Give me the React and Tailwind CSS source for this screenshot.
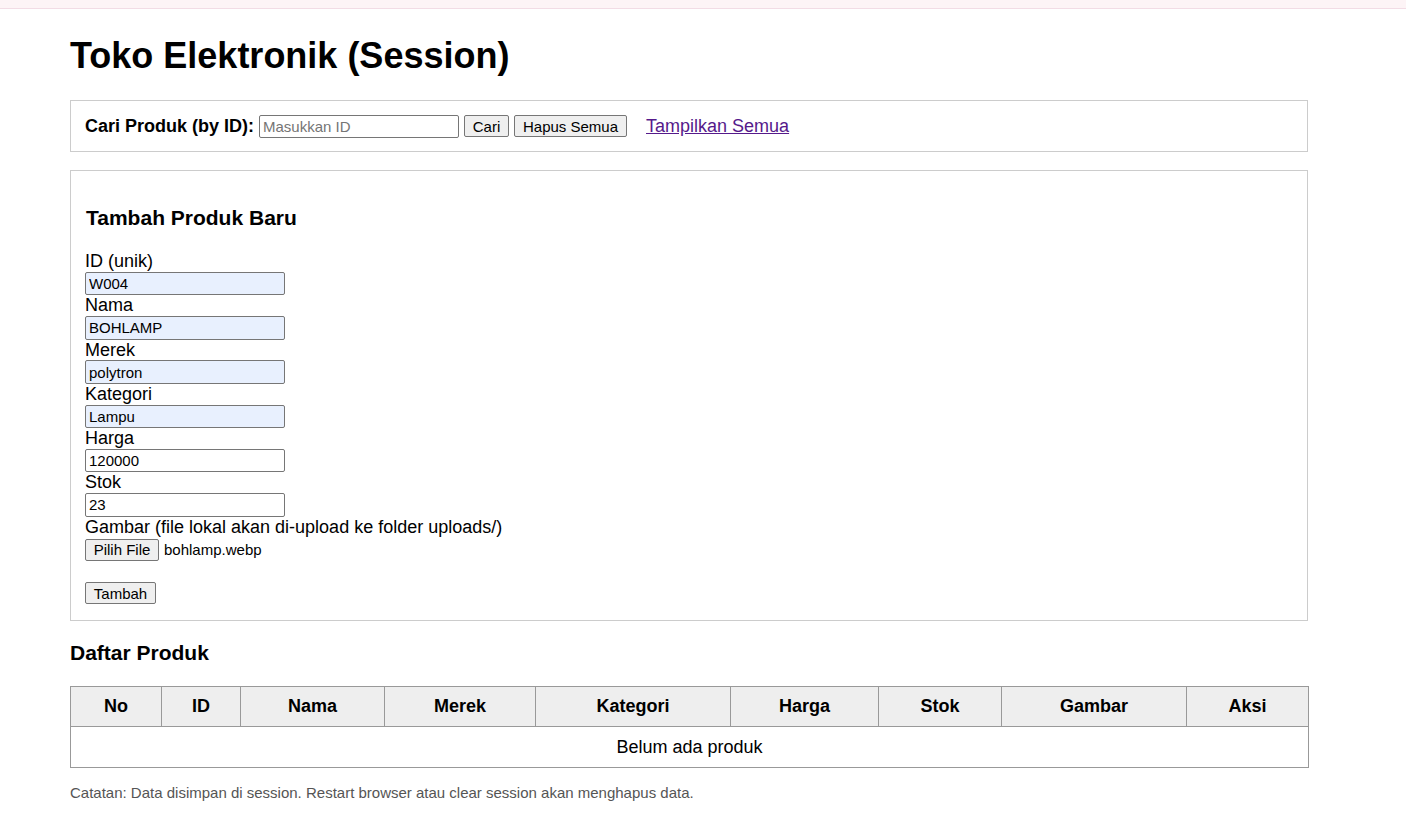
import React from 'react';

const fields = [
  { label: 'ID (unik)', value: 'W004', filled: true },
  { label: 'Nama', value: 'BOHLAMP', filled: true },
  { label: 'Merek', value: 'polytron', filled: true },
  { label: 'Kategori', value: 'Lampu', filled: true },
  { label: 'Harga', value: '120000', filled: false },
  { label: 'Stok', value: '23', filled: false },
];

const columns = [
  { name: 'No', w: 'w-[91px]' },
  { name: 'ID', w: 'w-[79px]' },
  { name: 'Nama', w: 'w-[144px]' },
  { name: 'Merek', w: 'w-[151px]' },
  { name: 'Kategori', w: 'w-[195px]' },
  { name: 'Harga', w: 'w-[148px]' },
  { name: 'Stok', w: 'w-[123px]' },
  { name: 'Gambar', w: 'w-[185px]' },
  { name: 'Aksi', w: 'w-[122px]' },
];

const btn = 'h-[22px] px-[7px] text-[15px] leading-none bg-[#efefef] border border-[#767676] rounded-[2px] text-black';

export default function App() {
  return (
    <div className="min-h-screen bg-white text-black text-[18px] leading-[1.15] font-['Liberation_Sans',Arial,sans-serif]">
      {/* thin strip at the very top */}
      <div className="h-[9px] bg-[#fdf4f6] border-b border-[#f2dce5]" />

      <div className="ml-[70px] w-[1238px] pt-[26px]">
        <h1 className="text-[36px] font-bold leading-[41px] mb-[24px]">Toko Elektronik (Session)</h1>

        {/* Search bar */}
        <div className="h-[52px] border border-[#cccccc] px-[14px] flex items-center">
          <span className="font-bold">Cari Produk (by ID):</span>
          <input
            type="text"
            placeholder="Masukkan ID"
            className="ml-[5px] w-[200px] h-[23px] px-[3px] text-[15px] border border-[#767676] rounded-[2px] placeholder:text-[#757575] outline-none"
          />
          <button className={`${btn} ml-[5px] w-[45px]`}>Cari</button>
          <button className={`${btn} ml-[5px] w-[113px]`}>Hapus Semua</button>
          <a href="#" className="ml-[19px] text-[#551a8b] underline">Tampilkan Semua</a>
        </div>

        {/* Add product form */}
        <div className="mt-[18px] border border-[#cccccc] px-[14px] pt-[35px] pb-[16px]">
          <h3 className="text-[21px] font-bold leading-[24px] mb-[21px] pl-[1px]">Tambah Produk Baru</h3>
          {fields.map(f => (
            <div key={f.label}>
              <label className="block leading-[20.7px]">{f.label}</label>
              <input
                type="text"
                defaultValue={f.value}
                className={`block w-[200px] h-[23.6px] px-[3px] text-[15px] border border-[#767676] rounded-[2px] outline-none ${f.filled ? 'bg-[#e8f0fe]' : 'bg-white'}`}
              />
            </div>
          ))}
          <label className="block leading-[20.7px]">Gambar (file lokal akan di-upload ke folder uploads/)</label>
          <div className="flex items-center mt-[1px] h-[23px]">
            <button className={`${btn} w-[74px]`}>Pilih File</button>
            <span className="ml-[5px] text-[15px]">bohlamp.webp</span>
          </div>
          <button className={`${btn} block mt-[21px] w-[71px]`}>Tambah</button>
        </div>

        <h3 className="text-[21px] font-bold leading-[24px] mt-[20px] mb-[21px]">Daftar Produk</h3>

        <table className="w-full table-fixed border-collapse border border-[#999999]">
          <thead>
            <tr className="bg-[#eeeeee]">
              {columns.map(c => (
                <th key={c.name} className={`${c.w} border border-[#999999] py-[9px] font-bold text-center`}>{c.name}</th>
              ))}
            </tr>
          </thead>
          <tbody>
            <tr>
              <td colSpan={9} className="border border-[#999999] py-[9.5px] text-center">Belum ada produk</td>
            </tr>
          </tbody>
        </table>

        <p className="mt-[16px] text-[15px] text-[#555555]">
          Catatan: Data disimpan di session. Restart browser atau clear session akan menghapus data.
        </p>
      </div>
    </div>
  );
}
